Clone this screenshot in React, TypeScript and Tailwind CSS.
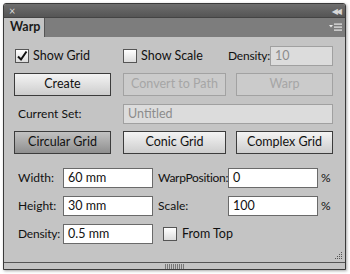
import React from "react";

const font = { fontFamily: 'Lato, "DejaVu Sans", sans-serif' };

const Checkbox = ({ checked }: { checked?: boolean }) => (
  <span className="flex h-[14px] w-[14px] shrink-0 items-center justify-center border border-[#555] bg-gradient-to-b from-[#ffffff] to-[#dcdcdc]">
    {checked && (
      <svg width="12" height="12" viewBox="0 0 12 12">
        <path d="M2 6.5 L5 9.5 L10.5 1.5" fill="none" stroke="#111" strokeWidth="2" />
      </svg>
    )}
  </span>
);

const Button = ({
  label,
  w,
  disabled,
  pressed,
}: {
  label: string;
  w: string;
  disabled?: boolean;
  pressed?: boolean;
}) => {
  let cls =
    "border-[#3c3c3c] bg-gradient-to-b from-[#f4f4f4] to-[#cdcdcd] text-[#111]";
  if (disabled) cls = "border-[#a2a2a2] bg-[#cbcbcb] text-[#a6a6a6]";
  if (pressed) cls = "border-[#3c3c3c] bg-gradient-to-b from-[#c2c2c2] to-[#8f8f8f] text-[#111]";
  return (
    <div className={`flex h-[23px] shrink-0 items-center justify-center border text-[12.5px] ${w} ${cls}`}>
      {label}
    </div>
  );
};

const Field = ({ value, disabled, w }: { value: string; disabled?: boolean; w: string }) => (
  <div
    className={`flex h-[20px] shrink-0 items-center border px-[4px] text-[12.5px] ${w} ${
      disabled ? "border-[#a0a0a0] bg-[#dcdcdc] text-[#8c8c8c]" : "border-[#6a6a6a] bg-white text-[#111]"
    }`}
  >
    {value}
  </div>
);

export default function App() {
  return (
    <div className="h-[274px] w-[350px] bg-white pl-[3px] pt-[3px]" style={font}>
      <div className="flex h-[267px] w-[343px] flex-col overflow-hidden rounded-t-[3px] border border-[#3a3a3a] bg-[#c4c4c4] shadow-[1px_1px_3px_rgba(0,0,0,0.35)]">
        {/* title bar */}
        <div className="flex h-[13px] items-center justify-between bg-gradient-to-b from-[#6e6e6e] to-[#555] px-[5px] text-[10px] leading-none text-[#d8d8d8]">
          <span className="text-[11px]">×</span>
          <span className="tracking-[-2px] text-[8px]">◀◀</span>
        </div>
        {/* tab row */}
        <div className="flex h-[20px] items-end border-t border-[#444] bg-[#7d7d7d]">
          <div className="flex h-[19px] w-[41px] items-center border-r border-[#555] bg-[#c4c4c4] pl-[6px] text-[12.5px] font-bold text-[#1a1a1a]">
            Warp
          </div>
          <div className="flex-1" />
          <div className="mb-[5px] mr-[3px] flex items-center gap-[1px]">
            <svg width="13" height="9" viewBox="0 0 13 9">
              <path d="M0 2 L4 2 L2 4.5 Z" fill="#e8e8e8" />
              <rect x="5" y="0.5" width="8" height="1.2" fill="#e8e8e8" />
              <rect x="5" y="3.5" width="8" height="1.2" fill="#e8e8e8" />
              <rect x="5" y="6.5" width="8" height="1.2" fill="#e8e8e8" />
            </svg>
          </div>
        </div>

        {/* content */}
        <div className="flex flex-1 flex-col pl-[10px] text-[12px] text-[#111]">
          {/* row 1 */}
          <div className="mt-[9px] flex h-[20px] items-center text-[12.5px]">
            <div className="ml-[1px] flex w-[108px] items-center gap-[4px]">
              <Checkbox checked />
              <span>Show Grid</span>
            </div>
            <div className="flex w-[105px] items-center gap-[4px]">
              <Checkbox />
              <span>Show Scale</span>
            </div>
            <span className="w-[42px] whitespace-nowrap text-[12px] tracking-[-0.2px]">Density:</span>
            <Field value="10" disabled w="w-[63px]" />
          </div>
          {/* row 2 */}
          <div className="mt-[7px] flex">
            <Button label="Create" w="w-[97px]" />
            <div className="ml-[12px]">
              <Button label="Convert to Path" w="w-[103px]" disabled />
            </div>
            <div className="ml-[10px]">
              <Button label="Warp" w="w-[97px]" disabled />
            </div>
          </div>
          {/* row 3 */}
          <div className="mt-[8px] flex h-[20px] items-center">
            <span className="w-[109px] pl-[4px]">Current Set:</span>
            <Field value="Untitled" disabled w="w-[210px]" />
          </div>
          {/* row 4 */}
          <div className="mt-[7px] flex">
            <Button label="Circular Grid" w="w-[97px]" pressed />
            <div className="ml-[12px]">
              <Button label="Conic Grid" w="w-[103px]" />
            </div>
            <div className="ml-[10px]">
              <Button label="Complex Grid" w="w-[97px]" />
            </div>
          </div>
          {/* fields */}
          <div className="mt-[14px] flex flex-col gap-[8px] pl-[4px]">
            <div className="flex h-[20px] items-center">
              <span className="w-[45px]">Width:</span>
              <Field value="60 mm" w="w-[90px]" />
              <span className="ml-[5px] w-[70px] whitespace-nowrap tracking-[-0.3px]">WarpPosition:</span>
              <Field value="0" w="w-[90px]" />
              <span className="ml-[3px]">%</span>
            </div>
            <div className="flex h-[20px] items-center">
              <span className="w-[45px]">Height:</span>
              <Field value="30 mm" w="w-[90px]" />
              <span className="ml-[5px] w-[70px]">Scale:</span>
              <Field value="100" w="w-[90px]" />
              <span className="ml-[3px]">%</span>
            </div>
            <div className="flex h-[20px] items-center">
              <span className="w-[45px] whitespace-nowrap tracking-[-0.2px]">Density:</span>
              <Field value="0.5 mm" w="w-[90px]" />
              <div className="ml-[10px] flex items-center gap-[5px] text-[12.5px]">
                <Checkbox />
                <span>From Top</span>
              </div>
            </div>
          </div>
          <div className="flex flex-1 items-end justify-end pb-[2px] pr-[2px]">
            <svg width="9" height="9" viewBox="0 0 9 9">
              {[
                [7, 1], [7, 3], [5, 3], [7, 5], [5, 5], [3, 5], [7, 7], [5, 7], [3, 7], [1, 7],
              ].map(([x, y], i) => (
                <rect key={i} x={x} y={y} width="1" height="1" fill="#555" />
              ))}
            </svg>
          </div>
        </div>
        {/* status bar */}
        <div className="flex h-[7px] items-center justify-center border-t border-[#555] bg-[#c4c4c4]">
          <svg width="20" height="5" viewBox="0 0 20 5">
            {Array.from({ length: 10 }).map((_, i) => (
              <rect key={i} x={i * 2} y="0" width="1" height="5" fill="#777" />
            ))}
          </svg>
        </div>
      </div>
    </div>
  );
}
